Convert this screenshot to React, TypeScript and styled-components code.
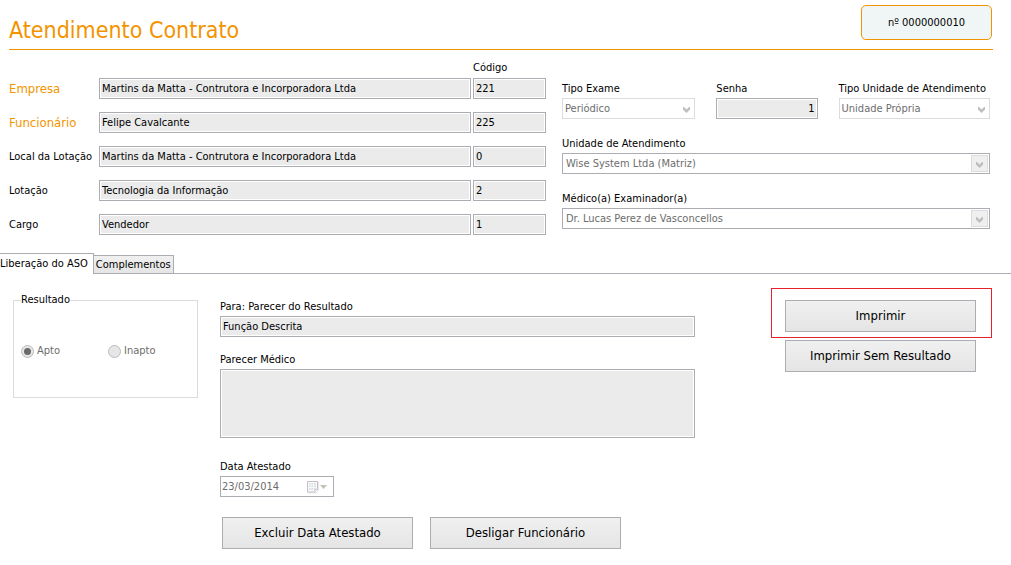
import React, { useId } from "react";
import styled, { createGlobalStyle } from "styled-components";

const GlobalStyle = createGlobalStyle`
  *, *::before, *::after { box-sizing: border-box; }
  body { margin: 0; background: #fff; color: #000; }
  body, button, input, select, textarea {
    font-family: "DejaVu Sans Condensed", "DejaVu Sans", sans-serif;
    font-size: 11px;
    line-height: 16px;
  }
`;

const orange = "#f29400";
const line = "#abadb3";
const faint = "#dcdcdc";
const muted = "#6d6d6d";

const Page = styled.div`
  min-width: 900px;
`;

const Header = styled.header`
  display: flex;
  justify-content: space-between;
  align-items: flex-start;
  height: 50px;
  margin: 0 18px 0 9px;
  padding-top: 5px;
  border-bottom: 1px solid ${orange};
`;

const Title = styled.h1`
  margin: 10px 0 0;
  color: ${orange};
  font-size: 23px;
  font-weight: 400;
  line-height: 30px;
`;

const NumberBadge = styled.div`
  width: 131px;
  margin-right: 1px;
  border: 1px solid ${orange};
  border-radius: 5px;
  background: #f0f6f6;
  line-height: 33px;
  text-align: center;
`;

const Summary = styled.section`
  display: grid;
  grid-template-columns: 537fr 428fr;
  gap: 16px;
  padding: 10px 21px 0 9px;
`;

const People = styled.div`
  display: grid;
  grid-template-columns: 90px minmax(0, 1fr) 73px;
  row-gap: 13px;
  align-items: center;
`;

const CodeHeading = styled.span`
  grid-column: 3;
  margin-bottom: -11px;
`;

const RowLabel = styled.label<{ $strong?: boolean }>`
  color: ${(p) => (p.$strong ? orange : "#000")};
  font-size: ${(p) => (p.$strong ? 13 : 11)}px;
`;

const TextInput = styled.input<{ $align?: string }>`
  display: block;
  width: 100%;
  height: 21px;
  margin: 0;
  padding: 0 2px;
  border: 1px solid ${line};
  border-radius: 0;
  outline: none;
  background: #ebebeb;
  box-shadow: inset 0 0 0 1px #fff;
  color: #000;
  text-align: ${(p) => p.$align ?? "left"};
`;

const NameCell = styled.div`
  padding-right: 2px;
`;

const Visit = styled.div`
  display: flex;
  flex-direction: column;
  gap: 17px;
  padding-top: 21px;
`;

const VisitRow = styled.div`
  display: grid;
  grid-template-columns: 133fr 101fr 151fr;
  gap: 21px;
`;

const FieldBox = styled.div`
  display: flex;
  flex-direction: column;
  gap: 1px;
  min-width: 0;
`;

const SelectFrame = styled.div<{ $boxed?: boolean }>`
  display: grid;
  grid-template-columns: 1fr 17px;
  align-items: center;
  height: 21px;
  padding-right: ${(p) => (p.$boxed ? 1 : 0)}px;
  border: 1px solid ${(p) => (p.$boxed ? line : faint)};
`;

const NativeSelect = styled.select<{ $boxed?: boolean }>`
  grid-row: 1;
  grid-column: 1 / 3;
  width: 100%;
  height: 19px;
  margin: 0;
  padding: 0 18px 0 ${(p) => (p.$boxed ? 3 : 2)}px;
  border: 0;
  outline: none;
  background: transparent;
  appearance: none;
  color: ${muted};
  opacity: 1;
`;

const SelectArrow = styled.span<{ $boxed?: boolean }>`
  grid-row: 1;
  grid-column: 2;
  display: grid;
  place-items: center;
  width: 17px;
  height: 17px;
  padding-top: 2px;
  padding-left: ${(p) => (p.$boxed ? 0 : 2)}px;
  border: 1px solid ${(p) => (p.$boxed ? faint : "transparent")};
  background: ${(p) => (p.$boxed ? "#efefef" : "transparent")};
  pointer-events: none;
`;

const TabBar = styled.div`
  display: flex;
  align-items: flex-end;
  margin-top: 18px;
  border-bottom: 1px solid ${line};
`;

const Tab = styled.button<{ $active?: boolean }>`
  height: ${(p) => (p.$active ? 21 : 18)}px;
  margin: 0 0 ${(p) => (p.$active ? -1 : 0)}px;
  padding: ${(p) => (p.$active ? "0 5px 0 0" : "0 2px")};
  border: 1px solid ${line};
  border-bottom-width: 0;
  border-left-width: 0;
  background: ${(p) => (p.$active ? "#fff" : "linear-gradient(#f0f0f0, #e5e5e5)")};
  color: #000;
`;

const Release = styled.section`
  display: grid;
  grid-template-columns: 185px minmax(0, 475px) minmax(221px, 1fr);
  column-gap: 22px;
  align-items: start;
  padding: 14px 19px 16px 13px;
`;

const ResultGroup = styled.fieldset`
  display: flex;
  gap: 48px;
  height: 105px;
  margin: 5px 0 0;
  padding: 36px 7px 0;
  border: 1px solid ${faint};
`;

const ResultLegend = styled.legend`
  padding: 0;
  line-height: 14px;
`;

const Choice = styled.label`
  display: flex;
  align-items: center;
  gap: 3px;
  height: 16px;
  color: ${muted};
`;

const Radio = styled.input`
  display: grid;
  place-items: center;
  width: 13px;
  height: 13px;
  margin: 0;
  border: 1px solid #bcbcbc;
  border-radius: 50%;
  background: #e6e6e6;
  appearance: none;

  &:checked::before {
    content: "";
    width: 7px;
    height: 7px;
    border-radius: 50%;
    background: #6a6a6a;
  }
`;

const Opinion = styled.div`
  display: flex;
  flex-direction: column;
  gap: 15px;
  padding-top: 11px;
`;

const Notes = styled.textarea`
  display: block;
  width: 100%;
  height: 69px;
  margin: 0 0 6px;
  padding: 2px;
  border: 1px solid ${line};
  border-radius: 0;
  outline: none;
  background: #ebebeb;
  box-shadow: inset 0 0 0 1px #fff;
  resize: none;
`;

const DateFrame = styled.div`
  display: flex;
  align-items: center;
  width: 114px;
  height: 21px;
  border: 1px solid ${line};
`;

const DateInput = styled.input`
  flex: 1;
  min-width: 0;
  height: 19px;
  margin: 0;
  padding: 0 1px;
  border: 0;
  outline: none;
  background: transparent;
  color: ${muted};
`;

const DateButton = styled.button`
  display: flex;
  margin: 0;
  padding: 0 5px 0 0;
  border: 0;
  background: transparent;
`;

const Actions = styled.div`
  display: flex;
  gap: 17px;
  padding: 5px 0 0 2px;
`;

const ActionButton = styled.button`
  width: 191px;
  height: 32px;
  margin: 0;
  padding: 0;
  border: 1px solid ${line};
  border-radius: 0;
  background: linear-gradient(#f0f0f0, #e5e5e5);
  color: #000;
  font-size: 13px;
  white-space: nowrap;
`;

const PrintPanel = styled.div`
  display: flex;
  flex-direction: column;
  align-items: flex-end;
  gap: 2px;
`;

const Highlight = styled.div`
  padding: 11px 15px 5px 13px;
  border: 1px solid #e8202a;
`;

const PlainPrint = styled.div`
  padding-right: 16px;
`;

function Chevron() {
  return (
    <svg width="7" height="6" viewBox="0 0 7 6" aria-hidden="true">
      <path d="M0 0h1l2.500 2.500L6 0h1v2.500L3.500 6 0 2.500z" fill="#bebebe" />
    </svg>
  );
}

function CalendarIcon() {
  return (
    <svg width="22" height="14" viewBox="0 0 22 14" aria-hidden="true">
      <path d="M2 12.9h8l2.300-2V2" fill="none" stroke="#e3dfe0" strokeWidth="1" />
      <path d="M1.500 1.500h10v8l-2.500 2.500H1.500z" fill="#fafafa" stroke="#c3bfc4" />
      <path d="M3 3h7v7H3z" fill="#d9e0e8" />
      <path d="M3 5h7M3 7.500h7M5 3v7M7.500 3v7" stroke="#fff" strokeWidth=".7" />
      <path d="M9 12V9.500h2.500" fill="#fff" stroke="#c3bfc4" strokeWidth=".8" />
      <path d="M14 5h7l-3.500 4z" fill="#c2c2b8" />
    </svg>
  );
}

function Field({ label, children }: { label: string; children: (id: string) => React.ReactNode }) {
  const id = useId();
  return (
    <FieldBox>
      <label htmlFor={id}>{label}</label>
      {children(id)}
    </FieldBox>
  );
}

function SelectField({ label, value, boxed }: { label: string; value: string; boxed?: boolean }) {
  return (
    <Field label={label}>
      {(id) => (
        <SelectFrame $boxed={boxed}>
          <NativeSelect id={id} $boxed={boxed} disabled defaultValue={value}>
            <option>{value}</option>
          </NativeSelect>
          <SelectArrow $boxed={boxed}>
            <Chevron />
          </SelectArrow>
        </SelectFrame>
      )}
    </Field>
  );
}

const people = [
  { label: "Empresa", name: "Martins da Matta - Contrutora e Incorporadora Ltda", code: "221", strong: true },
  { label: "Funcionário", name: "Felipe Cavalcante", code: "225", strong: true },
  { label: "Local da Lotação", name: "Martins da Matta - Contrutora e Incorporadora Ltda", code: "0" },
  { label: "Lotação", name: "Tecnologia da Informação", code: "2" },
  { label: "Cargo", name: "Vendedor", code: "1" },
];

export default function App() {
  return (
    <Page>
      <GlobalStyle />
      <Header>
        <Title>Atendimento Contrato</Title>
        <NumberBadge>nº 0000000010</NumberBadge>
      </Header>

      <Summary>
        <People>
          <CodeHeading id="code-heading">Código</CodeHeading>
          {people.map((row, i) => (
            <React.Fragment key={row.label}>
              <RowLabel htmlFor={`person-${i}`} $strong={row.strong}>
                {row.label}
              </RowLabel>
              <NameCell>
                <TextInput id={`person-${i}`} readOnly defaultValue={row.name} />
              </NameCell>
              <TextInput aria-labelledby="code-heading" readOnly defaultValue={row.code} />
            </React.Fragment>
          ))}
        </People>

        <Visit>
          <VisitRow>
            <SelectField label="Tipo Exame" value="Periódico" />
            <Field label="Senha">
              {(id) => <TextInput id={id} readOnly defaultValue="1" $align="right" />}
            </Field>
            <SelectField label="Tipo Unidade de Atendimento" value="Unidade Própria" />
          </VisitRow>
          <SelectField label="Unidade de Atendimento" value="Wise System Ltda (Matriz)" boxed />
          <SelectField label="Médico(a) Examinador(a)" value="Dr. Lucas Perez de Vasconcellos" boxed />
        </Visit>
      </Summary>

      <TabBar role="tablist">
        <Tab role="tab" aria-selected="true" $active>
          Liberação do ASO
        </Tab>
        <Tab role="tab" aria-selected="false">
          Complementos
        </Tab>
      </TabBar>

      <Release>
        <ResultGroup>
          <ResultLegend>Resultado</ResultLegend>
          <Choice>
            <Radio type="radio" name="resultado" disabled defaultChecked />
            Apto
          </Choice>
          <Choice>
            <Radio type="radio" name="resultado" disabled />
            Inapto
          </Choice>
        </ResultGroup>

        <Opinion>
          <Field label="Para: Parecer do Resultado">
            {(id) => <TextInput id={id} readOnly defaultValue="Função Descrita" />}
          </Field>
          <Field label="Parecer Médico">{(id) => <Notes id={id} readOnly />}</Field>
          <Field label="Data Atestado">
            {(id) => (
              <DateFrame>
                <DateInput id={id} disabled defaultValue="23/03/2014" />
                <DateButton disabled aria-label="Abrir calendário">
                  <CalendarIcon />
                </DateButton>
              </DateFrame>
            )}
          </Field>
          <Actions>
            <ActionButton>Excluir Data Atestado</ActionButton>
            <ActionButton>Desligar Funcionário</ActionButton>
          </Actions>
        </Opinion>

        <PrintPanel>
          <Highlight>
            <ActionButton>Imprimir</ActionButton>
          </Highlight>
          <PlainPrint>
            <ActionButton>Imprimir Sem Resultado</ActionButton>
          </PlainPrint>
        </PrintPanel>
      </Release>
    </Page>
  );
}
